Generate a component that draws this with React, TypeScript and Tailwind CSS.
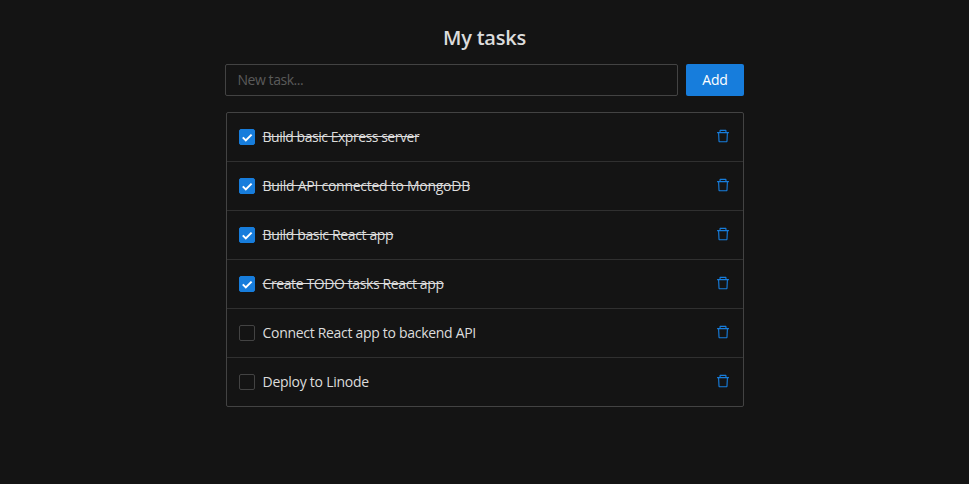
import { useState } from "react";
import { AiOutlineDelete } from "react-icons/ai";

type Task = { title: string; done: boolean; tracking: string };

const initialTasks: Task[] = [
  { title: "Build basic Express server", done: true, tracking: "tracking-[-0.47px]" },
  { title: "Build API connected to MongoDB", done: true, tracking: "tracking-[-0.27px]" },
  { title: "Build basic React app", done: true, tracking: "tracking-[-0.36px]" },
  { title: "Create TODO tasks React app", done: true, tracking: "tracking-[-0.39px]" },
  { title: "Connect React app to backend API", done: false, tracking: "tracking-[-0.3px]" },
  { title: "Deploy to Linode", done: false, tracking: "tracking-[-0.26px]" },
];

function Checkbox({ checked, onToggle }: { checked: boolean; onToggle: () => void }) {
  return (
    <button
      role="checkbox"
      aria-checked={checked}
      onClick={onToggle}
      className={`mr-[7.5px] flex size-4 shrink-0 items-center justify-center rounded-[2px] border ${
        checked ? "border-[#177ddc] bg-[#177ddc]" : "border-[#434343]"
      }`}
    >
      {checked && (
        <svg viewBox="0 0 14 14" className="size-3.5 shrink-0" fill="none" stroke="#fff" strokeWidth="2">
          <path d="M2.8 7.4 L5.8 10.4 L11.6 4.6" />
        </svg>
      )}
    </button>
  );
}

export default function App() {
  const [tasks, setTasks] = useState(initialTasks);
  const toggle = (index: number) =>
    setTasks(tasks.map((t, i) => (i === index ? { ...t, done: !t.done } : t)));

  return (
    <main className="h-[484px] w-full overflow-hidden bg-[#141414] font-['Open_Sans',sans-serif] text-sm text-[#dcdcdc]">
      <div className="ml-[225px] w-[519px] pt-[22px]">
        <h1 className="mb-2.5 text-center text-[20px] leading-8 font-semibold tracking-[-0.2px]">My tasks</h1>
        <div className="flex gap-2">
          <input
            placeholder="New task..."
            className="h-8 min-w-0 flex-1 rounded-[2px] border border-[#434343] bg-transparent px-[11.5px] pb-0.5 tracking-[-0.45px] outline-none placeholder:text-[#5a5a5a]"
          />
          <button className="h-8 w-[58px] rounded-[2px] bg-[#177ddc] tracking-[-0.1px] text-white">Add</button>
        </div>
        <ul className="mt-4 ml-px rounded-[2px] border border-[#434343]">
          {tasks.map((task, i) => (
            <li
              key={task.title}
              className="flex h-[49px] items-center border-b border-[#303030] px-3 last:h-12 last:border-b-0"
            >
              <Checkbox checked={task.done} onToggle={() => toggle(i)} />
              <span className={`whitespace-nowrap ${task.tracking} ${task.done ? "line-through" : ""}`}>
                {task.title}
              </span>
              <button
                aria-label="Delete task"
                onClick={() => setTasks(tasks.filter((_, j) => j !== i))}
                className="mb-[3px] ml-auto text-[#177ddc]"
              >
                <AiOutlineDelete size={16} />
              </button>
            </li>
          ))}
        </ul>
      </div>
    </main>
  );
}
